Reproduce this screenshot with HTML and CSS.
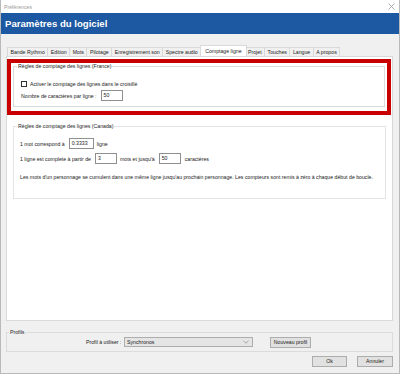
FILE: index.html
```html
<!DOCTYPE html>
<html lang="fr">
<head>
<meta charset="utf-8">
<title>Préférences</title>
<link rel="stylesheet" href="styles.css">
</head>
<body>
<div class="window">
  <div class="titlebar">
    <span class="wintitle">Préférences</span>
    <svg class="close" width="7" height="7" viewBox="0 0 7 7"><path d="M0.5 0.5L6.5 6.5M6.5 0.5L0.5 6.5" stroke="#9a9a9a" stroke-width="0.8" fill="none"/></svg>
  </div>
  <div class="header">Paramètres du logiciel</div>
  <div class="body">
    <div class="tabs">
      <div class="tab">Bande Rythmo</div>
      <div class="tab">Edition</div>
      <div class="tab">Mots</div>
      <div class="tab">Pilotage</div>
      <div class="tab">Enregistrement son</div>
      <div class="tab">Spectre audio</div>
      <div class="tab active">Comptage ligne</div>
      <div class="tab">Projet</div>
      <div class="tab">Touches</div>
      <div class="tab">Langue</div>
      <div class="tab">A propos</div>
    </div>
    <div class="panel">
      <div class="highlight">
        <fieldset class="group france">
          <legend>Règles de comptage des lignes (France)</legend>
          <div class="content">
            <label class="row check-row"><span class="checkbox"></span>Activer le comptage des lignes dans le croisillé</label>
            <div class="row">Nombre de caractères par ligne :<span class="input w22 gap4">50</span></div>
          </div>
        </fieldset>
      </div>
      <fieldset class="group canada">
        <legend>Règles de comptage des lignes (Canada)</legend>
        <div class="content">
          <div class="row r1">1 mot correspond à<span class="input w25 gap4">0.3333</span><span class="gap3">ligne</span></div>
          <div class="row r2">1 ligne est complete à partir de<span class="input w22 gap4">3</span><span class="gap3">mots et jusqu'à</span><span class="input w22 gap4">50</span><span class="gap4">caractères</span></div>
          <div class="row r3">Les mots d'un personnage se cumulent dans une même ligne jusqu'au prochain personnage. Les compteurs sont remis à zéro à chaque début de boucle.</div>
        </div>
      </fieldset>
    </div>
    <fieldset class="group profils">
      <legend>Profils</legend>
      <div class="profil-row">
        <span class="plabel">Profil à utiliser :</span>
        <div class="select"><span>Synchronos</span>
          <svg width="6" height="4" viewBox="0 0 6 4"><path d="M0.5 0.8L3 3.2L5.5 0.8" stroke="#8a8a8a" stroke-width="0.7" fill="none"/></svg>
        </div>
        <button class="btn new">Nouveau profil</button>
      </div>
    </fieldset>
    <div class="actions">
      <button class="btn ok">Ok</button>
      <button class="btn cancel">Annuler</button>
    </div>
  </div>
</div>
</body>
</html>
```
FILE: styles.css
```css
* { box-sizing: border-box; }
html, body { margin: 0; padding: 0; }
body {
  width: 400px;
  height: 375px;
  overflow: hidden;
  background: #ffffff;
  font-family: "Liberation Sans", Arial, sans-serif;
  font-size: 5.2px;
  color: #1a1a1a;
}
.window {
  width: 400px;
  height: 374px;
  border: 1px solid #b9b9b9;
  border-top: none;
  background: #f0f0f0;
  display: flex;
  flex-direction: column;
}
.titlebar {
  height: 13px;
  background: #ffffff;
  display: flex;
  align-items: center;
  justify-content: space-between;
  padding: 0 4px 0 3px;
}
.wintitle { color: #9a9a9a; }
.close { display: block; }
.header {
  height: 21px;
  background: #1d59a2;
  color: #ffffff;
  font-weight: bold;
  font-size: 9.6px;
  line-height: 21px;
  padding-left: 4px;
}
.body {
  flex: 1;
  display: flex;
  flex-direction: column;
  padding: 11px 6px 0 5px;
}
.tabs {
  display: flex;
  align-items: flex-end;
  height: 11px;
  padding-left: 1px;
}
.tab {
  height: 9px;
  line-height: 8px;
  padding: 0 2.5px;
  border: 1px solid #d9d9d9;
  border-bottom: none;
  border-left: none;
  background: #f0f0f0;
  white-space: nowrap;
}
.tab:first-child { border-left: 1px solid #d9d9d9; }
.tab.active {
  height: 11px;
  line-height: 10px;
  background: #ffffff;
  padding: 0 4px;
  border-left: 1px solid #d9d9d9;
  margin-left: -1px;
  margin-right: -1px;
  position: relative;
  z-index: 1;
}
.panel {
  height: 265px;
  background: #ffffff;
  border: 1px solid #d9d9d9;
  padding: 2px 1px 0 0;
  display: flex;
  flex-direction: column;
}
.highlight {
  border: 4px solid #c80000;
  padding: 0 2px 4px 2px;
}
.group {
  margin: 0;
  border: 1px solid #dcdcdc;
  padding: 0 0 0 3px;
  min-width: 0;
}
.group legend {
  padding: 0 1px;
  line-height: 7px;
}
.content { padding-left: 4px; }
.row {
  display: flex;
  align-items: center;
  white-space: nowrap;
}
.france .content { padding-top: 9px; padding-bottom: 5px; }
.check-row { height: 9px; }
.checkbox {
  width: 6px;
  height: 6px;
  border: 1px solid #333;
  background: #fff;
  margin-right: 3px;
}
.france .row + .row { margin-top: 2px; height: 11px; }
.input {
  display: inline-block;
  height: 11px;
  line-height: 9px;
  border: 1px solid #8f8f8f;
  background: #fff;
  padding: 0 2px;
  color: #222;
}
.w22 { width: 22px; }
.w25 { width: 25px; }
.gap4 { margin-left: 4px; }
.gap3 { margin-left: 3px; }
.canada {
  margin: 8px 5px 0 6px;
  padding-bottom: 16px;
  border-color: #e3e3e3;
}
.canada .content { padding-left: 3px; padding-top: 8px; }
.canada .row { height: 11px; }
.canada .r2 { margin-top: 4px; }
.canada .r3 { margin-top: 7px; }
.profils {
  margin: 8px 0 0 0;
  padding: 0 0 3px 2px;
  border-color: #dcdcdc;
}
.profil-row {
  display: flex;
  align-items: center;
  height: 12px;
  padding-left: 77px;
}
.plabel { width: 35px; text-align: right; white-space: nowrap; }
.select {
  margin-left: 3px;
  width: 129px;
  height: 10px;
  background: #e5e5e5;
  border: 1px solid #adadad;
  display: flex;
  align-items: center;
  justify-content: space-between;
  padding: 0 3px 0 2px;
}
.select svg { display: block; }
.btn {
  font-family: inherit;
  font-size: 5.2px;
  color: #1a1a1a;
  background: #e1e1e1;
  border: 1px solid #adadad;
  height: 11px;
  padding: 0;
  margin: 0;
  line-height: 9px;
}
.new { margin-left: 17px; width: 41px; }
.actions {
  display: flex;
  justify-content: flex-end;
  gap: 10px;
  margin-top: 4px;
}
.ok { width: 35px; }
.cancel { width: 36px; }
```
